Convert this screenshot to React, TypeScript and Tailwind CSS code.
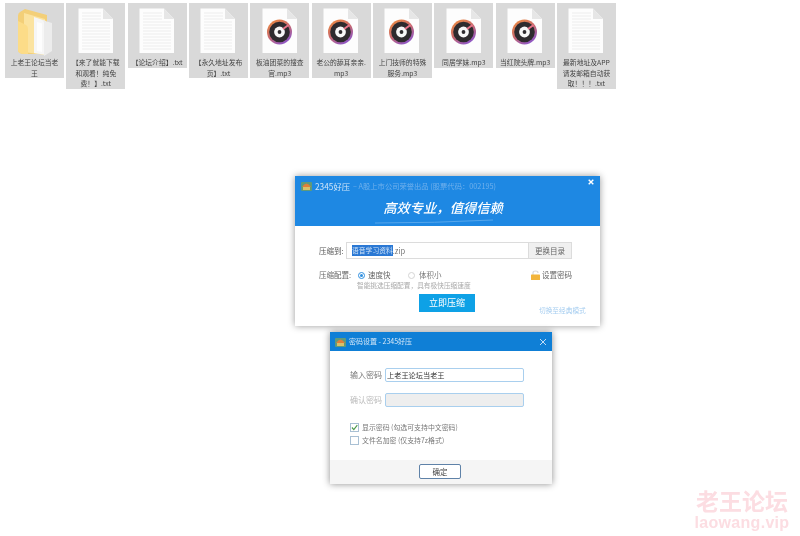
const files = [
  { type: 'folder', lines: ['上老王论坛当老', '王'] },
  { type: 'txt', lines: ['【来了就能下载', '和观看！纯免', '费！】.txt'] },
  { type: 'txt', lines: ['【论坛介绍】.txt'] },
  { type: 'txt', lines: ['【永久地址发布', '页】.txt'] },
  { type: 'mp3', lines: ['板油团菜的搜查', '官.mp3'] },
  { type: 'mp3', lines: ['老公的舔耳亲亲.', 'mp3'] },
  { type: 'mp3', lines: ['上门技师的特殊', '服务.mp3'] },
  { type: 'mp3', lines: ['同居学妹.mp3'] },
  { type: 'mp3', lines: ['当红院头牌.mp3'] },
  { type: 'txt', lines: ['最新地址及APP', '请发邮箱自动获', '取！！！.txt'] },
]

const FolderIcon = () => (
  <svg width="36" height="49" viewBox="0 0 36 49">
    <path d="M1 8 Q1 5 3 4 L8 1 L30 7 L30 46 L8 46 Q1 46 1 42 Z" fill="#f3cf78" />
    <path d="M7 5 L28 11 L28 47 L7 44 Z" fill="#fbe3a0" />
    <path d="M17 9 L29 13 L29 47 L17 45 Z" fill="#f6f6f6" />
    <path d="M25 12 L35 15 L35 43 L27 48 L27 14 Z" fill="#ececec" />
    <path d="M20 14 L25 15.5 L25 44 L20 43 Z" fill="#fdfdfd" />
    <path d="M1 13 L9 17 Q11 18 11 21 L11 46 L7 46 Q1 46 1 42 Z" fill="#fcdc88" />
  </svg>
)

const PageShape = () => (
  <>
    <path d="M0.5 0.5 H25 L35 11 V45 H0.5 Z" fill="#fdfdfd" />
    <path d="M25 0.5 L35 11 H25 Z" fill="#e6e6e6" />
  </>
)

const TxtIcon = () => (
  <svg width="36" height="46" viewBox="0 0 36 46">
    <PageShape />
    {[5, 8, 11, 14, 17, 20, 23, 26, 29, 32, 35, 38, 41].map((y) => (
      <line key={y} x1="4" x2={y < 12 ? 23 : 32} y1={y} y2={y} stroke="#ededed" strokeWidth="1" />
    ))}
  </svg>
)

const Mp3Icon = () => (
  <svg width="36" height="46" viewBox="0 0 36 46">
    <defs>
      <linearGradient id="ring" x1="0.1" y1="0" x2="0.7" y2="1">
        <stop offset="0" stopColor="#ef8d3e" />
        <stop offset="0.5" stopColor="#c96a6c" />
        <stop offset="1" stopColor="#8b56cc" />
      </linearGradient>
    </defs>
    <PageShape />
    <circle cx="17.5" cy="24" r="12.5" fill="url(#ring)" />
    <circle cx="17.5" cy="24" r="10.3" fill="#2e2b2e" />
    <circle cx="17.5" cy="24" r="5.4" fill="#f7f7f7" />
    <circle cx="17.5" cy="24" r="1.9" fill="#2e2b2e" />
    <path d="M21 21 L26.5 17" stroke="#e8748a" strokeWidth="2" />
  </svg>
)

const AppLogo = () => (
  <svg width="11" height="10" viewBox="0 0 11 10">
    <rect x="0" y="1" width="11" height="9" rx="1" fill="#5f9a7a" />
    <path d="M1 6 Q5.5 -1 10 6 Z" fill="#e07f3a" />
    <rect x="2" y="6" width="7" height="3" fill="#d9c06a" />
  </svg>
)

const LockIcon = () => (
  <svg width="9" height="10" viewBox="0 0 9 10">
    <path d="M2 5 V3 Q2 1 4.5 1 Q7 1 7 3" fill="none" stroke="#d9d9d9" strokeWidth="1.2" />
    <rect x="0" y="4.5" width="9" height="5.5" rx="0.6" fill="#f2b53c" />
  </svg>
)

const FileTile = ({ type, lines }: { type: string; lines: string[] }) => (
  <div className="w-[59px] bg-[#d9d9d9] flex flex-col items-center pt-[5px]">
    <div className="h-[49px] flex justify-center">
      {type === 'folder' && <FolderIcon />}
      {type === 'txt' && <TxtIcon />}
      {type === 'mp3' && <Mp3Icon />}
    </div>
    <div className="text-[6.8px] leading-[10.5px] text-[#444] text-center whitespace-nowrap">
      {lines.map((l) => (
        <div key={l}>{l}</div>
      ))}
    </div>
  </div>
)

const App = () => {
  return (
    <div className="relative w-[800px] h-[536px] overflow-hidden bg-white blur-[0.35px] font-['Noto_Sans_CJK_SC','Liberation_Sans',sans-serif]">
      {/* file tiles */}
      <div className="h-[88px] pt-[3px] pl-[5px] flex items-start gap-[2.33px] box-content">
        {files.map((f, i) => (
          <FileTile key={i} type={f.type} lines={f.lines} />
        ))}
      </div>

      {/* compress dialog */}
      <div className="mt-[85px] ml-[295px] w-[305px] h-[150px] bg-white shadow-[0_0_7px_rgba(0,0,0,0.4)]">
        <div className="h-[50px] bg-[#1e88e3] px-[6px] pt-[4px] relative">
          <div className="flex items-center gap-[3px] h-[12px]">
            <AppLogo />
            <span className="text-[8.3px] text-[#cfe4f8] whitespace-nowrap">2345好压</span>
            <span className="text-[7.3px] text-[#6fb0ec] whitespace-nowrap">– A股上市公司荣誉出品 (股票代码：002195)</span>
          </div>
          <div className="flex justify-center mt-[4px] ml-[-9px]">
            <span className="text-[13.3px] leading-[24px] font-medium italic text-white whitespace-nowrap">高效专业，值得信赖</span>
          </div>
          <svg className="absolute left-[80px] top-[43px]" width="120" height="5" viewBox="0 0 120 5">
            <path d="M0 4 Q60 4 118 1" fill="none" stroke="#6fb3ee" strokeWidth="0.7" />
          </svg>
          <svg className="absolute right-[6px] top-[3px]" width="6" height="6" viewBox="0 0 6 6">
            <path d="M0.7 0.7 L5.3 5.3 M5.3 0.7 L0.7 5.3" stroke="#ffffff" strokeWidth="1.4" />
          </svg>
        </div>
        <div className="pl-[24px] pr-[28px] pt-[16px]">
          <div className="flex items-center h-[17px]">
            <span className="w-[27px] text-[7.5px] text-[#555] whitespace-nowrap">压缩到:</span>
            <div className="flex-1 h-[17px] flex border border-[#dcdcdc]">
              <div className="flex-1 flex items-center pl-[5px] text-[7.5px] text-[#777]">
                <span className="bg-[#2a78d4] text-[#cfe3f7] h-[11px] leading-[11px] text-[6.8px] whitespace-nowrap">语音学习资料</span>
                <span>.zip</span>
              </div>
              <div className="w-[43px] bg-[#f0f0f0] border-l border-[#dcdcdc] text-[7.5px] text-[#666] flex items-center justify-center">更换目录</div>
            </div>
          </div>
          <div className="flex items-center h-[12px] mt-[10px] text-[7.5px] text-[#666]">
            <span className="w-[39px] whitespace-nowrap">压缩配置:</span>
            <span className="w-[7px] h-[7px] rounded-full border border-[#2f8fe0] flex items-center justify-center">
              <span className="w-[3px] h-[3px] rounded-full bg-[#2f8fe0]" />
            </span>
            <span className="ml-[3px] w-[40px]">速度快</span>
            <span className="w-[7px] h-[7px] rounded-full border border-[#d5d5d5]" />
            <span className="ml-[4px] w-[112px] text-[#777]">体积小</span>
            <LockIcon />
            <span className="ml-[2px] whitespace-nowrap">设置密码</span>
          </div>
          <div className="ml-[38px] h-[9px] leading-[9px] text-[6.7px] text-[#aaa] whitespace-nowrap">智能挑选压缩配置，具有极快压缩速度</div>
          <div className="flex items-end mt-[4px] mr-[-14px]">
            <div className="ml-[100px] shrink-0 w-[56px] h-[18px] bg-[#0ea1e6] text-white text-[9px] flex items-center justify-center">立即压缩</div>
            <span className="ml-[64px] shrink-0 mb-[-3px] text-[6.7px] leading-[10px] text-[#a5cdf0] whitespace-nowrap">切换至经典模式</span>
          </div>
        </div>
      </div>

      {/* password dialog */}
      <div className="mt-[6px] ml-[330px] w-[222px] h-[152px] bg-white flex flex-col shadow-[0_0_7px_rgba(0,0,0,0.45)]">
        <div className="h-[19px] bg-[#0f7fd6] flex items-center px-[5px] gap-[3px]">
          <AppLogo />
          <span className="text-[7px] text-[#d6e8f8] whitespace-nowrap">密码设置 - 2345好压</span>
          <svg className="ml-auto" width="8" height="8" viewBox="0 0 8 8">
            <path d="M1 1 L7 7 M7 1 L1 7" stroke="#d6e8f8" strokeWidth="0.9" />
          </svg>
        </div>
        <div className="flex-1 pl-[20px] pt-[17px]">
          <div className="flex items-center h-[14px]">
            <span className="w-[35px] text-[8px] text-[#777] whitespace-nowrap">输入密码</span>
            <div className="w-[139px] h-[14px] border border-[#a9cfee] rounded-[2px] pl-[1px] text-[7.2px] leading-[12px] text-[#333] whitespace-nowrap">上老王论坛当老王</div>
          </div>
          <div className="flex items-center h-[14px] mt-[11px]">
            <span className="w-[35px] text-[8px] text-[#bbb] whitespace-nowrap">确认密码</span>
            <div className="w-[139px] h-[14px] border border-[#a9cfee] rounded-[2px] bg-[#eeeeee]" />
          </div>
          <div className="flex items-center h-[9px] mt-[16px] gap-[3px]">
            <span className="w-[9px] h-[9px] border border-[#a9c0d4] flex items-center justify-center">
              <svg width="7" height="7" viewBox="0 0 6 6">
                <path d="M0.8 3 L2.4 4.8 L5.4 1" fill="none" stroke="#4d9a4d" strokeWidth="1" />
              </svg>
            </span>
            <span className="text-[6.9px] text-[#777] whitespace-nowrap">显示密码 (勾选可支持中文密码)</span>
          </div>
          <div className="flex items-center h-[9px] mt-[4px] gap-[3px]">
            <span className="w-[9px] h-[9px] border border-[#a9c0d4]" />
            <span className="text-[6.9px] text-[#777] whitespace-nowrap">文件名加密 (仅支持7z格式)</span>
          </div>
        </div>
        <div className="h-[24px] bg-[#f5f5f5] flex items-start justify-center pt-[4px]">
          <div className="ml-[-2px] w-[42px] h-[15px] bg-white border border-[#5f82a8] rounded-[2px] text-[7.5px] text-[#444] flex items-center justify-center">确定</div>
        </div>
      </div>

      {/* watermark */}
      <div className="absolute left-[695px] top-[486px] w-[94px] flex flex-col items-center text-[#fcdde2] font-bold">
        <div className="text-[23px] leading-[28px] whitespace-nowrap">老王论坛</div>
        <div className="text-[16px] leading-[18px] font-['Liberation_Sans',sans-serif] tracking-[0.3px] whitespace-nowrap">laowang.vip</div>
      </div>
    </div>
  )
}

export default App
